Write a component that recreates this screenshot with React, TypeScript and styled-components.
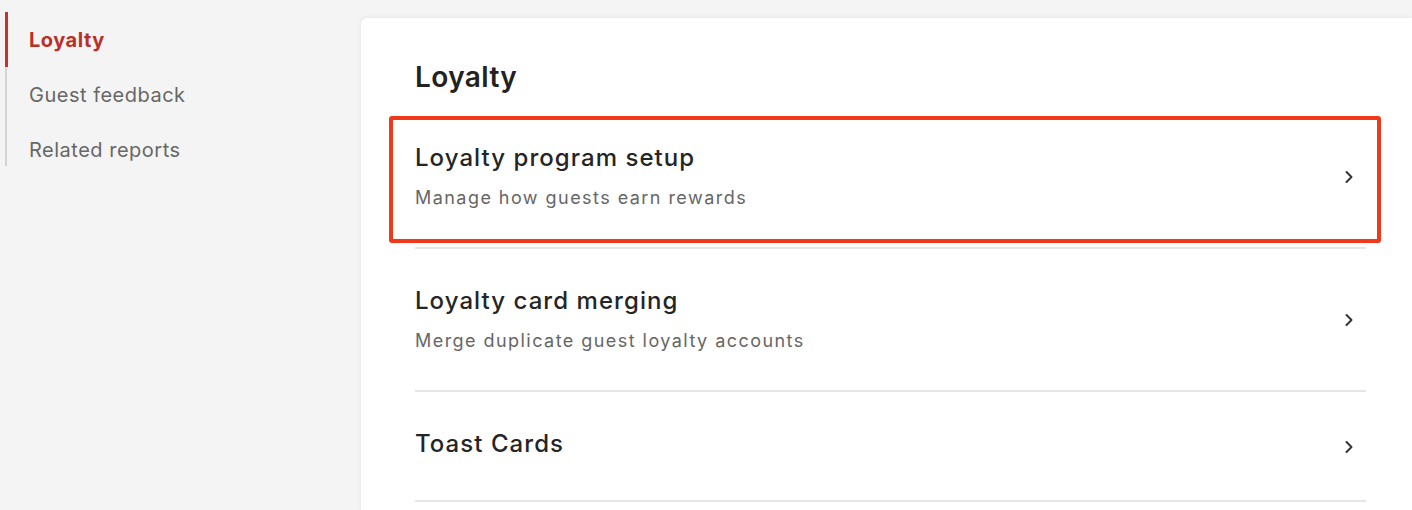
import React from "react";
import styled, { createGlobalStyle } from "styled-components";

const GlobalStyle = createGlobalStyle`
  html, body {
    margin: 0;
    padding: 0;
    background: #f4f4f4;
    font-family: Inter, Lato, "Open Sans", Arial, sans-serif;
    -webkit-font-smoothing: antialiased;
  }
  * { box-sizing: border-box; }
`;

const Page = styled.div`
  display: flex;
  width: 1412px;
  height: 510px;
  overflow: hidden;
  background: #f4f4f4;
`;

const Sidebar = styled.aside`
  width: 361px;
  flex-shrink: 0;
  padding: 12px 0 0 5px;
`;

const Nav = styled.nav`
  display: flex;
  flex-direction: column;
  height: 154px;
  border-left: 2px solid #d4d4d4;
`;

const NavItem = styled.a<{ $active?: boolean }>`
  display: flex;
  align-items: center;
  flex-shrink: 0;
  height: 55px;
  margin-left: -2px;
  padding-left: 21px;
  border-left: 3px solid ${(p) => (p.$active ? "#c2352b" : "transparent")};
  color: ${(p) => (p.$active ? "#b9302a" : "#676767")};
  font-size: 20px;
  letter-spacing: 0.5px;
  font-weight: ${(p) => (p.$active ? 700 : 400)};
  text-decoration: none;
  cursor: pointer;
`;

const Card = styled.main`
  flex: 1;
  margin-top: 18px;
  padding: 41px 46px 0 54px;
  background: #ffffff;
  border-radius: 6px 0 0 0;
  box-shadow: 0 0 4px rgba(0, 0, 0, 0.08);
`;

const Heading = styled.h1`
  margin: 0 0 11px;
  height: 36px;
  line-height: 36px;
  font-size: 28px;
  font-weight: 600;
  letter-spacing: 0.4px;
  color: #222222;
`;

const List = styled.div`
  display: flex;
  flex-direction: column;
`;

const Row = styled.div<{ $highlight?: boolean }>`
  position: relative;
  display: flex;
  align-items: center;
  justify-content: space-between;
  min-height: 110px;
  padding: 37px 0 36px;
  border-bottom: 2px solid #e6e6e6;
  cursor: pointer;

  ${(p) =>
    p.$highlight &&
    `
    &::after {
      content: "";
      position: absolute;
      top: 10px;
      bottom: 4px;
      left: -26px;
      right: -15px;
      border: 4px solid #f0381a;
      border-radius: 3px;
      pointer-events: none;
    }
  `}
`;

const RowText = styled.div`
  display: flex;
  flex-direction: column;
  align-self: flex-start;
  gap: 12px;
`;

const RowTitle = styled.div`
  height: 30px;
  line-height: 30px;
  font-size: 24px;
  font-weight: 500;
  letter-spacing: 1.05px;
  color: #252525;
`;

const RowSubtitle = styled.div`
  height: 26px;
  line-height: 26px;
  font-size: 18px;
  letter-spacing: 1.45px;
  color: #666666;
`;

const Chevron = styled.svg`
  width: 16px;
  height: 16px;
  margin-right: 9px;
  flex-shrink: 0;
`;

const ChevronIcon = () => (
  <Chevron viewBox="0 0 16 16" fill="none">
    <path d="M5.5 3l5 5-5 5" stroke="#333333" strokeWidth="2" strokeLinecap="round" strokeLinejoin="round" />
  </Chevron>
);

const rows = [
  { title: "Loyalty program setup", subtitle: "Manage how guests earn rewards", highlight: true },
  { title: "Loyalty card merging", subtitle: "Merge duplicate guest loyalty accounts" },
  { title: "Toast Cards" },
];

export default function App() {
  return (
    <>
      <GlobalStyle />
      <Page>
        <Sidebar>
          <Nav>
            <NavItem $active>Loyalty</NavItem>
            <NavItem>Guest feedback</NavItem>
            <NavItem>Related reports</NavItem>
          </Nav>
        </Sidebar>
        <Card>
          <Heading>Loyalty</Heading>
          <List>
            {rows.map((r) => (
              <Row key={r.title} $highlight={r.highlight}>
                <RowText>
                  <RowTitle>{r.title}</RowTitle>
                  {r.subtitle && <RowSubtitle>{r.subtitle}</RowSubtitle>}
                </RowText>
                <ChevronIcon />
              </Row>
            ))}
          </List>
        </Card>
      </Page>
    </>
  );
}
